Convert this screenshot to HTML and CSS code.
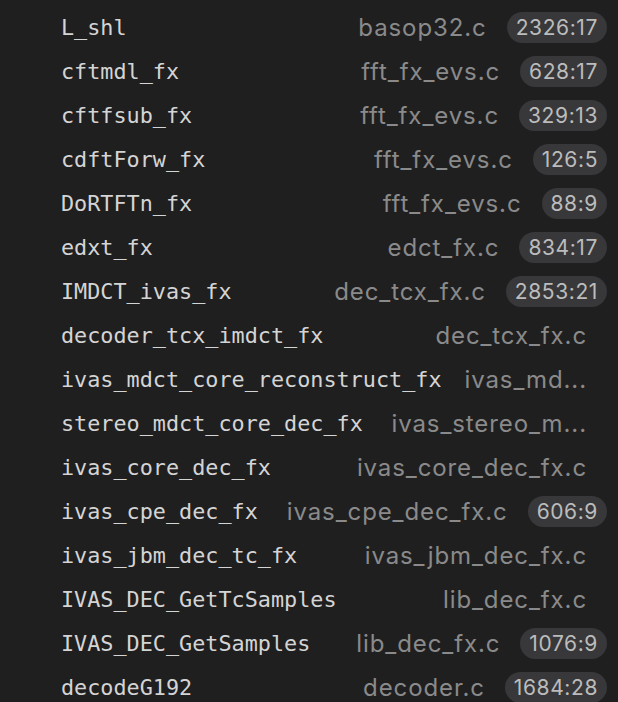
FILE: index.html
```html
<!DOCTYPE html>
<html lang="en">
<head>
  <meta charset="UTF-8">
  <meta name="viewport" content="width=device-width, initial-scale=1.0">
  <title>Call Stack</title>
  <link rel="stylesheet" href="styles.css">
</head>
<body>
  <div class="stack">
    <div class="frame">
      <span class="fn">L_shl</span>
      <span class="file">basop32.c</span>
      <span class="line">2326:17</span>
    </div>
    <div class="frame">
      <span class="fn">cftmdl_fx</span>
      <span class="file">fft_fx_evs.c</span>
      <span class="line">628:17</span>
    </div>
    <div class="frame">
      <span class="fn">cftfsub_fx</span>
      <span class="file">fft_fx_evs.c</span>
      <span class="line">329:13</span>
    </div>
    <div class="frame">
      <span class="fn">cdftForw_fx</span>
      <span class="file">fft_fx_evs.c</span>
      <span class="line">126:5</span>
    </div>
    <div class="frame">
      <span class="fn">DoRTFTn_fx</span>
      <span class="file">fft_fx_evs.c</span>
      <span class="line">88:9</span>
    </div>
    <div class="frame">
      <span class="fn">edxt_fx</span>
      <span class="file">edct_fx.c</span>
      <span class="line">834:17</span>
    </div>
    <div class="frame">
      <span class="fn">IMDCT_ivas_fx</span>
      <span class="file">dec_tcx_fx.c</span>
      <span class="line">2853:21</span>
    </div>
    <div class="frame no-line">
      <span class="fn">decoder_tcx_imdct_fx</span>
      <span class="file">dec_tcx_fx.c</span>
    </div>
    <div class="frame no-line">
      <span class="fn">ivas_mdct_core_reconstruct_fx</span>
      <span class="file">ivas_md...</span>
    </div>
    <div class="frame no-line">
      <span class="fn">stereo_mdct_core_dec_fx</span>
      <span class="file">ivas_stereo_m...</span>
    </div>
    <div class="frame no-line">
      <span class="fn">ivas_core_dec_fx</span>
      <span class="file">ivas_core_dec_fx.c</span>
    </div>
    <div class="frame">
      <span class="fn">ivas_cpe_dec_fx</span>
      <span class="file">ivas_cpe_dec_fx.c</span>
      <span class="line">606:9</span>
    </div>
    <div class="frame no-line">
      <span class="fn">ivas_jbm_dec_tc_fx</span>
      <span class="file">ivas_jbm_dec_fx.c</span>
    </div>
    <div class="frame no-line">
      <span class="fn">IVAS_DEC_GetTcSamples</span>
      <span class="file">lib_dec_fx.c</span>
    </div>
    <div class="frame">
      <span class="fn">IVAS_DEC_GetSamples</span>
      <span class="file">lib_dec_fx.c</span>
      <span class="line">1076:9</span>
    </div>
    <div class="frame">
      <span class="fn">decodeG192</span>
      <span class="file">decoder.c</span>
      <span class="line">1684:28</span>
    </div>
  </div>
</body>
</html>
```

FILE: styles.css
```css
* {
  margin: 0;
  padding: 0;
  box-sizing: border-box;
}

body {
  width: 618px;
  height: 702px;
  background: #1f1f20;
  overflow: hidden;
  font-family: Inter, 'Liberation Sans', sans-serif;
}

.stack {
  padding-top: 5px;
}

.frame {
  display: flex;
  align-items: center;
  height: 44px;
  padding: 0 11px 0 61px;
}

.fn {
  flex: none;
  font-family: 'DejaVu Sans Mono', monospace;
  font-size: 21.8px;
  color: #d4d4d4;
  white-space: nowrap;
}

.file {
  flex: 1;
  min-width: 0;
  margin-left: 22px;
  font-size: 24px;
  letter-spacing: 0.9px;
  color: #8a8a8a;
  text-align: right;
  white-space: nowrap;
  overflow: hidden;
}

.no-line .file {
  margin-right: 20px;
}

.line {
  flex: none;
  margin-left: 20px;
  padding: 0 9px;
  height: 31px;
  line-height: 31px;
  border-radius: 16px;
  background: #38383a;
  color: #bcbcbc;
  font-size: 21px;
  letter-spacing: 0.6px;
}
```
